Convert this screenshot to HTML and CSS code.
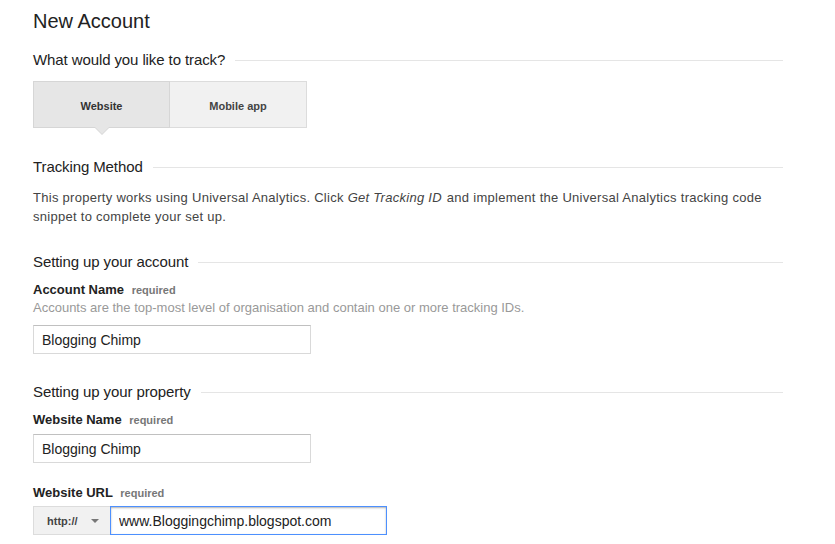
FILE: index.html
```html
<!DOCTYPE html>
<html lang="en">
<head>
    <meta charset="UTF-8">
    <title>New Account</title>
    <link rel="stylesheet" href="styles.css">
</head>
<body>
    <div class="page">
        <h1 class="title">New Account</h1>

        <div class="section-head"><span>What would you like to track?</span></div>
        <div class="tabs">
            <div class="tab active">Website</div>
            <div class="tab">Mobile app</div>
        </div>

        <div class="section-head gap-tracking"><span>Tracking Method</span></div>
        <p class="intro">This property works using Universal Analytics. Click <em>Get Tracking ID</em> and implement the Universal Analytics tracking code<br>snippet to complete your set up.</p>

        <div class="section-head gap-account"><span>Setting up your account</span></div>
        <div class="field-label">Account Name <span class="req">required</span></div>
        <div class="help">Accounts are the top-most level of organisation and contain one or more tracking IDs.</div>
        <input class="text-input gap-help" type="text" value="Blogging Chimp">

        <div class="section-head gap-property"><span>Setting up your property</span></div>
        <div class="field-label">Website Name <span class="req">required</span></div>
        <input class="text-input gap-label" type="text" value="Blogging Chimp">

        <div class="field-label gap-url">Website URL <span class="req">required</span></div>
        <div class="url-row">
            <div class="scheme">http:// <span class="caret"></span></div>
            <input class="url-input" type="text" value="www.Bloggingchimp.blogspot.com">
        </div>
    </div>
</body>
</html>
```

FILE: styles.css
```css
body {
    margin: 0;
    font-family: "Liberation Sans", Arial, sans-serif;
    color: #222;
    background-color: #fff;
}
.page {
    padding: 0 52px 0 33px;
}
.title {
    margin: 9px 0 0;
    font-size: 20px;
    line-height: 24px;
    font-weight: normal;
    color: #222;
}
.section-head {
    display: flex;
    align-items: center;
    margin-top: 17px;
    font-size: 15px;
    line-height: 20px;
    letter-spacing: -0.1px;
    color: #222;
}
.section-head::after {
    content: "";
    flex: 1;
    height: 1px;
    margin-left: 10px;
    background-color: #e5e5e5;
}
.gap-tracking {
    margin-top: 29px;
}
.gap-account {
    margin-top: 26px;
}
.gap-property {
    margin-top: 28px;
}
.tabs {
    display: flex;
    margin-top: 11px;
    width: 274px;
}
.tab {
    position: relative;
    box-sizing: border-box;
    width: 137px;
    height: 47px;
    padding-top: 2px;
    display: flex;
    align-items: center;
    justify-content: center;
    font-size: 11px;
    font-weight: bold;
    color: #444;
    background-color: #f1f1f1;
    border: 1px solid #dcdcdc;
}
.tab + .tab {
    border-left: none;
}
.tab.active {
    background-color: #e6e6e6;
    border-color: #d6d6d6;
    color: #333;
}
/* pointer under the selected tab */
.tab.active::after,
.tab.active::before {
    content: "";
    position: absolute;
    left: 50%;
    width: 0;
    height: 0;
    border-style: solid;
}
.tab.active::before {
    bottom: -8px;
    margin-left: -8px;
    border-width: 8px 8px 0 8px;
    border-color: #d6d6d6 transparent transparent transparent;
}
.tab.active::after {
    bottom: -7px;
    margin-left: -7px;
    border-width: 7px 7px 0 7px;
    border-color: #e6e6e6 transparent transparent transparent;
}
.intro {
    margin: 11px 0 0;
    font-size: 13px;
    line-height: 19px;
    letter-spacing: 0.28px;
    color: #444;
}
.intro em {
    padding-right: 1px;
}
.field-label {
    margin-top: 9px;
    font-size: 13px;
    line-height: 18px;
    font-weight: bold;
    color: #222;
}
.gap-url {
    margin-top: 21px;
}
.req {
    margin-left: 4px;
    font-size: 11px;
    color: #777;
}
.help {
    font-size: 13px;
    line-height: 18px;
    color: #999;
}
.text-input {
    display: block;
    box-sizing: border-box;
    width: 278px;
    height: 29px;
    padding: 0 8px;
    font-family: "Liberation Sans", Arial, sans-serif;
    font-size: 14px;
    color: #222;
    border: 1px solid #d9d9d9;
    border-top-color: #c0c0c0;
    outline: none;
}
.gap-help {
    margin-top: 8px;
}
.gap-label {
    margin-top: 5px;
}
.url-row {
    display: flex;
    margin-top: 4px;
    height: 29px;
}
.scheme {
    box-sizing: border-box;
    width: 77px;
    display: flex;
    align-items: center;
    padding-left: 13px;
    font-size: 11px;
    font-weight: bold;
    color: #444;
    background-color: #f1f1f1;
    border: 1px solid #dcdcdc;
    border-right: none;
}
.caret {
    margin-left: 13px;
    width: 0;
    height: 0;
    border-style: solid;
    border-width: 4px 4px 0 4px;
    border-color: #777 transparent transparent transparent;
}
.url-input {
    box-sizing: border-box;
    width: 277px;
    height: 29px;
    padding: 0 8px;
    font-family: "Liberation Sans", Arial, sans-serif;
    font-size: 14px;
    color: #222;
    border: 1px solid #4d90fe;
    box-shadow: inset 0 1px 2px rgba(0, 0, 0, 0.3);
    outline: none;
}
```
